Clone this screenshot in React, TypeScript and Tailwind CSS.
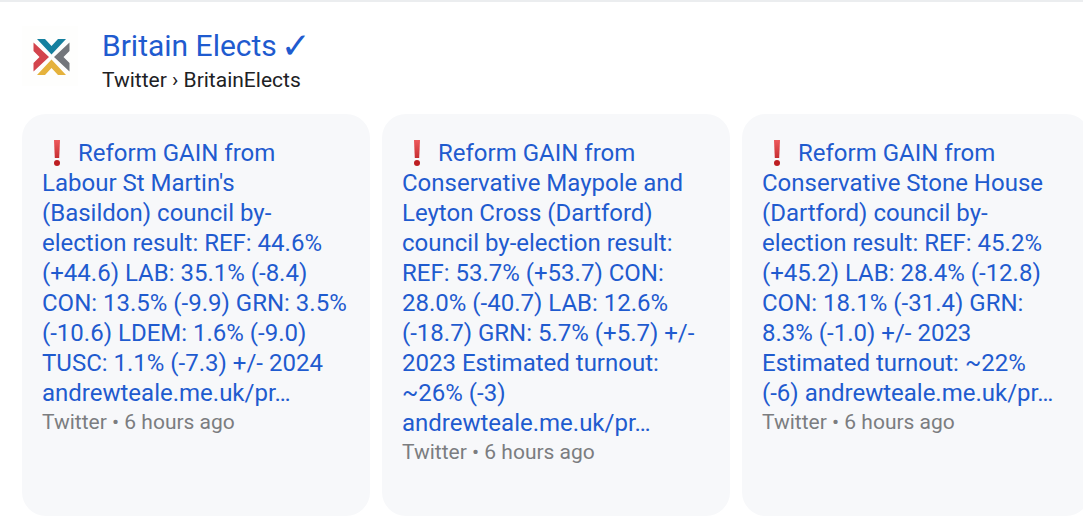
interface Tweet {
  id: number;
  lines: string[];
}

const tweets: Tweet[] = [
  {
    id: 1,
    lines: [
      'Reform GAIN from',
      "Labour St Martin's",
      '(Basildon) council by-',
      'election result: REF: 44.6%',
      '(+44.6) LAB: 35.1% (-8.4)',
      'CON: 13.5% (-9.9) GRN: 3.5%',
      '(-10.6) LDEM: 1.6% (-9.0)',
      'TUSC: 1.1% (-7.3) +/- 2024',
      'andrewteale.me.uk/pr…',
    ],
  },
  {
    id: 2,
    lines: [
      'Reform GAIN from',
      'Conservative Maypole and',
      'Leyton Cross (Dartford)',
      'council by-election result:',
      'REF: 53.7% (+53.7) CON:',
      '28.0% (-40.7) LAB: 12.6%',
      '(-18.7) GRN: 5.7% (+5.7) +/-',
      '2023 Estimated turnout:',
      '~26% (-3)',
      'andrewteale.me.uk/pr…',
    ],
  },
  {
    id: 3,
    lines: [
      'Reform GAIN from',
      'Conservative Stone House',
      '(Dartford) council by-',
      'election result: REF: 45.2%',
      '(+45.2) LAB: 28.4% (-12.8)',
      'CON: 18.1% (-31.4) GRN:',
      '8.3% (-1.0) +/- 2023',
      'Estimated turnout: ~22%',
      '(-6) andrewteale.me.uk/pr…',
    ],
  },
];

function Logo() {
  return (
    <svg className="h-15 w-14 shrink-0" viewBox="0 0 56 60" aria-hidden="true">
      <rect width="56" height="60" fill="#fefefd" />
      <path d="M15 13h8l6.500 7 6.500-7h8L29.500 28.500z" fill="#16809f" />
      <path d="M11.500 16.500L27 31 11.500 45.500V37l6-6-6-6z" fill="#d3444c" />
      <path d="M47.500 16.500L32 31l15.500 14.500V37l-6-6 6-6z" fill="#73767b" />
      <path d="M29.500 33.500L44 49h-8l-6.500-7-6.500 7h-8z" fill="#e5b23c" />
    </svg>
  );
}

function ExclamationIcon() {
  return (
    <svg className="mr-2 inline-block h-7 w-7 align-text-bottom" viewBox="0 0 28 28" aria-hidden="true">
      <defs>
        <linearGradient id="bang" x1="0" y1="0" x2="0" y2="1">
          <stop offset="0" stopColor="#ee5a5c" />
          <stop offset="1" stopColor="#c62f32" />
        </linearGradient>
      </defs>
      <path d="M12 1h6l-.8 18h-4.400z" fill="url(#bang)" />
      <circle cx="15" cy="24" r="3" fill="#bd1e22" />
    </svg>
  );
}

function TweetCard({ tweet }: { tweet: Tweet }) {
  return (
    <article className="w-[348px] shrink-0 rounded-3xl bg-[#f7f8fa] px-5 pt-6 pb-[50px]">
      <a href="#" className="block text-2xl leading-[30px] whitespace-nowrap text-[#1f5bcf]">
        {tweet.lines.map((line, i) => (
          <span key={line} className="block h-[30px]">
            {i === 0 && <ExclamationIcon />}
            {line}
          </span>
        ))}
      </a>
      <p className="text-[21px] leading-7 text-[#7b7d80]">Twitter • 6 hours ago</p>
    </article>
  );
}

export default function App() {
  return (
    <main className="min-h-screen overflow-hidden border-t-2 border-[#ebedef] bg-white font-['Roboto',sans-serif]">
      <header className="flex items-start gap-6 px-[22px] pt-6">
        <Logo />
        <div>
          <h1 className="text-3xl leading-10 text-[#1f5bcf]">
            <a href="#" className="flex h-10 items-center gap-1">
              <span>Britain Elects</span>
              <span className="font-['DejaVu_Sans',sans-serif] text-4xl leading-10">✓</span>
            </a>
          </h1>
          <p className="text-[21px] leading-7 text-[#202124]">Twitter › BritainElects</p>
        </div>
      </header>
      <section className="mt-5 flex gap-3 pl-[22px]">
        {tweets.map((tweet) => (
          <TweetCard key={tweet.id} tweet={tweet} />
        ))}
      </section>
    </main>
  );
}
